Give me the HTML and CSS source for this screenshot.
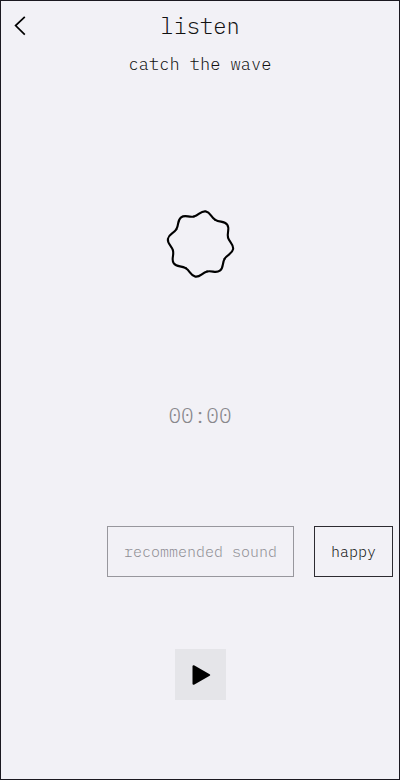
FILE: index.html
```html
<!DOCTYPE html>
<html lang="en">
<head>
<meta charset="utf-8">
<meta name="viewport" content="width=device-width, initial-scale=1">
<title>listen</title>
<link rel="stylesheet" href="styles.css">
</head>
<body>
<main class="screen">
  <header class="header">
    <button class="back" type="button" aria-label="Back">
      <svg width="12" height="20" viewBox="0 0 12 20" fill="none" stroke="currentColor" stroke-width="1.7"><path d="M10.8 .8 1.6 9.6l9.2 9"/></svg>
    </button>
    <h1 class="title">listen</h1>
  </header>
  <p class="subtitle">catch the wave</p>
  <svg class="wave" viewBox="-36.5 -36 72 72" fill="none" stroke="currentColor" stroke-width="2.1" stroke-linecap="round" aria-hidden="true">
    <defs><path id="lobe" d="M-10.83-26.15C-5.93-28.18-5-33 0-33S5.93-28.18 10.83-26.15"/></defs>
    <use href="#lobe" transform="rotate(9)"/>
    <use href="#lobe" transform="rotate(54)"/>
    <use href="#lobe" transform="rotate(99)"/>
    <use href="#lobe" transform="rotate(144)"/>
    <use href="#lobe" transform="rotate(189)"/>
    <use href="#lobe" transform="rotate(234)"/>
    <use href="#lobe" transform="rotate(279)"/>
    <use href="#lobe" transform="rotate(324)"/>
  </svg>
  <time class="timer">00:00</time>
  <div class="sounds">
    <button class="sound sound-muted" type="button">recommended sound</button>
    <button class="sound" type="button">happy</button>
  </div>
  <button class="play" type="button" aria-label="Play">
    <svg width="20" height="22" viewBox="0 0 20 22" fill="currentColor" stroke="currentColor" stroke-width="2" stroke-linejoin="round"><path d="M2.5 2.2v17.6L18.2 11z"/></svg>
  </button>
</main>
</body>
</html>
```
FILE: styles.css
```css
* {
  box-sizing: border-box;
}

body {
  margin: 0;
  background: #f2f1f6;
  color: #000;
  font-family: "IBM Plex Mono", "Liberation Mono", monospace;
}

button {
  margin: 0;
  padding: 0;
  border: 0;
  background: none;
  color: inherit;
  font: inherit;
}

.screen {
  display: flex;
  flex-direction: column;
  align-items: center;
  min-height: 100vh;
  border: 1px solid #1b1820;
}

.header {
  display: grid;
  grid-template-columns: 48px 1fr 48px;
  align-items: center;
  width: 100%;
  height: 50px;
}

.back {
  display: flex;
  align-items: center;
  height: 50px;
  padding-left: 13px;
}

.title {
  margin: 0;
  color: #111;
  font-size: 22px;
  font-weight: 300;
  line-height: 28px;
  text-align: center;
}

.subtitle {
  margin: 0;
  color: #111;
  font-size: 17px;
  font-weight: 300;
  line-height: 26px;
}

.wave {
  width: 72px;
  height: 72px;
  margin-top: 131px;
}

.timer {
  margin-top: 121px;
  color: #88878c;
  font-size: 21px;
  font-weight: 300;
  line-height: 28px;
}

.sounds {
  display: flex;
  justify-content: flex-end;
  gap: 20px;
  width: 100%;
  margin-top: 97px;
  padding-right: 6px;
}

.sound {
  height: 51px;
  padding: 0 16px;
  border: 1px solid #2d2b31;
  color: #111;
  font-size: 15px;
  font-weight: 300;
  white-space: nowrap;
}

.sound-muted {
  border-color: #98979d;
  color: #8f8e94;
}

.play {
  display: flex;
  align-items: center;
  justify-content: center;
  width: 51px;
  height: 51px;
  margin-top: 72px;
  padding-left: 2px;
  background: #e5e5e9;
}
```
